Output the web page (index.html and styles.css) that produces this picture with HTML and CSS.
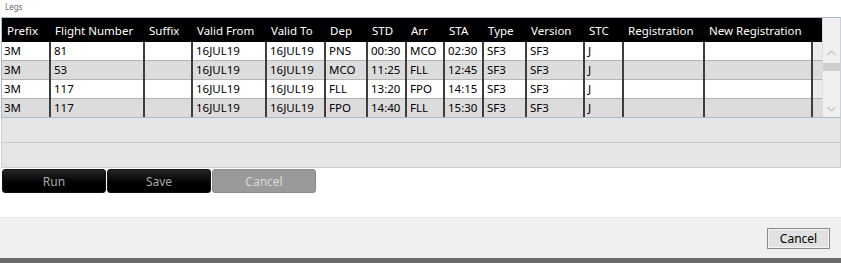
FILE: index.html
```html
<!DOCTYPE html>
<html lang="en">
<head>
  <meta charset="UTF-8" />
  <title>Legs</title>
  <link rel="stylesheet" href="styles.css">
</head>
<body>
  <div class="caption">Legs</div>

  <div class="grid">
    <table class="legs">
      <colgroup>
        <col style="width:48px"><col style="width:94px"><col style="width:48px">
        <col style="width:74px"><col style="width:59px"><col style="width:42px">
        <col style="width:39px"><col style="width:38px"><col style="width:39px">
        <col style="width:43px"><col style="width:58px"><col style="width:39px">
        <col style="width:81px"><col style="width:108px"><col style="width:10px">
      </colgroup>
      <thead>
        <tr>
          <th>Prefix</th><th>Flight Number</th><th>Suffix</th><th>Valid From</th>
          <th>Valid To</th><th>Dep</th><th>STD</th><th>Arr</th><th>STA</th>
          <th>Type</th><th>Version</th><th>STC</th><th>Registration</th>
          <th>New Registration</th><th></th>
        </tr>
      </thead>
      <tbody>
        <tr>
          <td>3M</td><td>81</td><td></td><td>16JUL19</td><td>16JUL19</td><td>PNS</td>
          <td>00:30</td><td>MCO</td><td>02:30</td><td>SF3</td><td>SF3</td><td>J</td>
          <td></td><td></td><td></td>
        </tr>
        <tr class="alt">
          <td>3M</td><td>53</td><td></td><td>16JUL19</td><td>16JUL19</td><td>MCO</td>
          <td>11:25</td><td>FLL</td><td>12:45</td><td>SF3</td><td>SF3</td><td>J</td>
          <td></td><td></td><td></td>
        </tr>
        <tr>
          <td>3M</td><td>117</td><td></td><td>16JUL19</td><td>16JUL19</td><td>FLL</td>
          <td>13:20</td><td>FPO</td><td>14:15</td><td>SF3</td><td>SF3</td><td>J</td>
          <td></td><td></td><td></td>
        </tr>
        <tr class="alt">
          <td>3M</td><td>117</td><td></td><td>16JUL19</td><td>16JUL19</td><td>FPO</td>
          <td>14:40</td><td>FLL</td><td>15:30</td><td>SF3</td><td>SF3</td><td>J</td>
          <td></td><td></td><td></td>
        </tr>
      </tbody>
    </table>

    <div class="scroll">
      <div class="scroll-corner"></div>
      <div class="scroll-track">
        <div class="scroll-btn up">
          <svg width="9" height="6" viewBox="0 0 9 6"><path d="M0.5 5 L4.5 1 L8.5 5" fill="none" stroke="#a6a6a6" stroke-width="1"/></svg>
        </div>
        <div class="scroll-thumb"></div>
        <div class="scroll-space"></div>
        <div class="scroll-btn">
          <svg width="9" height="6" viewBox="0 0 9 6"><path d="M0.5 1 L4.5 5 L8.5 1" fill="none" stroke="#a6a6a6" stroke-width="1"/></svg>
        </div>
      </div>
    </div>
  </div>

  <div class="blank-rows">
    <div class="blank"></div>
    <div class="blank"></div>
  </div>

  <div class="actions">
    <button class="dark">Run</button>
    <button class="dark">Save</button>
    <button class="dim" disabled>Cancel</button>
  </div>

  <div class="footer">
    <button class="win">Cancel</button>
  </div>
</body>
</html>
```

FILE: styles.css
```css
body {
  margin: 0;
  background: #fff;
  font-family: "Noto Sans", "Open Sans", sans-serif;
  font-size: 11.5px;
  color: #000;
}
.caption {
  height: 14px;
  padding: 3px 0 0 5px;
  font-size: 8px;
  line-height: 8px;
  color: #6a6a6a;
}
.grid {
  display: flex;
  margin-left: 1px;
  border: 1px solid #a9bace;
  border-right-color: #c9d2dc;
}
.legs {
  width: 820px;
  table-layout: fixed;
  border-collapse: collapse;
  border-spacing: 0;
}
.legs th {
  height: 24px;
  padding: 0 0 0 5px;
  background: #000;
  color: #fff;
  font-weight: normal;
  text-align: left;
  white-space: nowrap;
  overflow: hidden;
}
.legs td {
  height: 18px;
  padding: 0 0 0 3px;
  background: #fff;
  border-left: 2px solid #3d3d3d;
  border-bottom: 1px solid #b5b5b5;
  white-space: nowrap;
  line-height: 16px;
}
.legs td:first-child {
  border-left: none;
  padding-left: 2px;
}
.legs tr.alt td {
  background: #dcdcdc;
}
.legs tr:last-child td {
  border-bottom: none;
}
.legs td:last-child {
  background: #ececec;
}
.scroll {
  width: 18px;
  display: flex;
  flex-direction: column;
  background: #f0f0f0;
  border-left: 1px solid #dcdcdc;
}
.scroll-corner {
  height: 24px;
}
.scroll-track {
  flex: 1;
  display: flex;
  flex-direction: column;
}
.scroll-btn {
  height: 17px;
  display: flex;
  align-items: center;
  justify-content: center;
}
.scroll-btn.up {
  height: 21px;
}
.scroll-thumb {
  height: 8px;
  background: #cdcdcd;
}
.scroll-space {
  flex: 1;
}
.blank-rows {
  margin-left: 1px;
  border: 1px solid #d2d2d2;
  border-top: none;
  background: #e6e6e6;
}
.blank {
  height: 24px;
}
.blank + .blank {
  border-top: 1px solid #c9c9c9;
}
.actions {
  display: flex;
  gap: 1px;
  padding: 1px 0 0 2px;
}
.actions button {
  width: 104px;
  height: 24px;
  border-radius: 3px;
  font-family: "Noto Sans", "Open Sans", sans-serif;
  font-size: 12px;
  cursor: pointer;
}
.dark {
  background: linear-gradient(#262626, #000 60%);
  border: 1px solid #111;
  color: #a9a9a9;
}
.dim {
  background: #9a9a9a;
  border: 1px solid #8c8c8c;
  color: #d9d9d9;
}
.footer {
  margin-top: 24px;
  height: 40px;
  background: #f0f0f0;
  border-top: 1px solid #e8e8e8;
  border-bottom: 5px solid #6b6b6b;
  display: flex;
  align-items: center;
  justify-content: flex-end;
  padding-right: 11px;
}
.win {
  width: 63px;
  height: 21px;
  padding: 0;
  background: #e1e1e1;
  border: 1px solid #8a8a8a;
  box-shadow: inset 0 0 0 1px #f4f4f4;
  font-family: "Noto Sans", "Open Sans", sans-serif;
  font-size: 12px;
  color: #000;
}
```
